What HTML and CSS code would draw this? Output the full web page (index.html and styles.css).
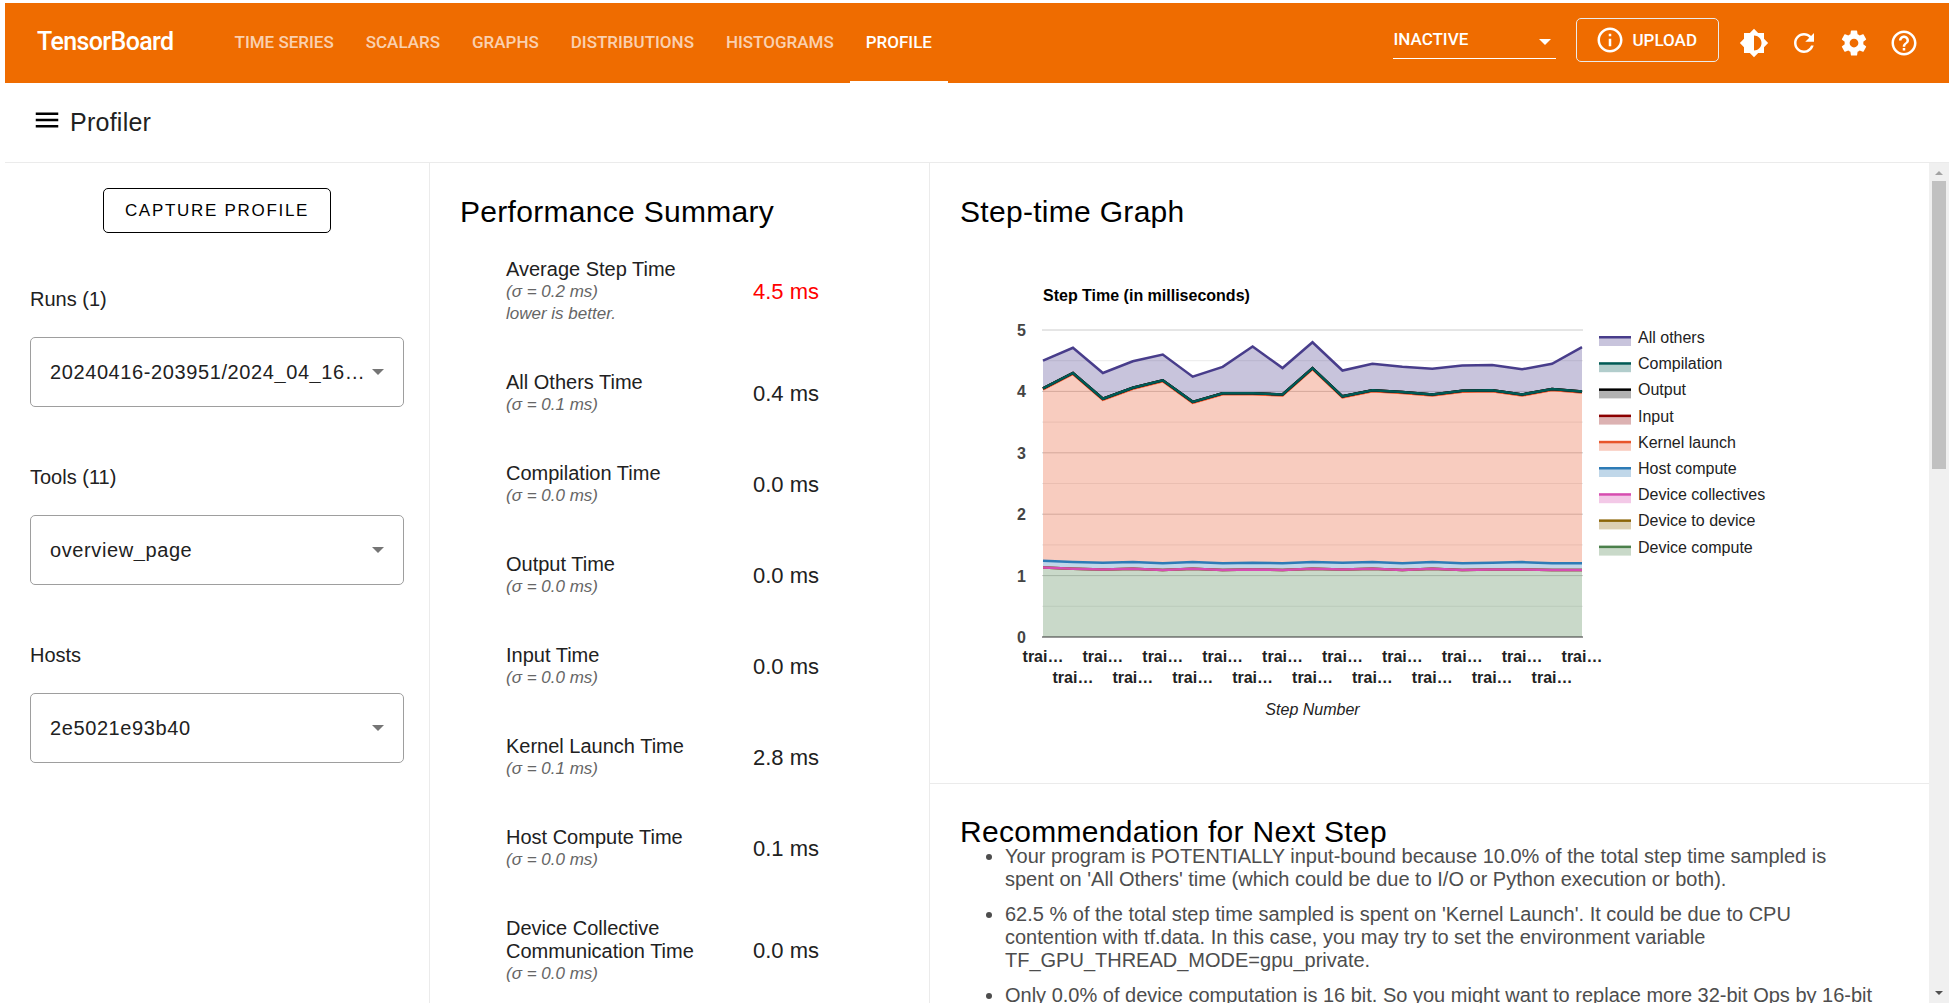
FILE: index.html
```html
<!DOCTYPE html>
<html lang="en">
<head>
<meta charset="utf-8">
<title>TensorBoard</title>
<link rel="stylesheet" href="styles.css">
</head>
<body>
<div class="app">
  <header class="topbar">
    <h1 class="brand">TensorBoard</h1>
    <nav class="tabs">
      <a class="tab" href="#time-series">TIME SERIES</a>
      <a class="tab" href="#scalars">SCALARS</a>
      <a class="tab" href="#graphs">GRAPHS</a>
      <a class="tab" href="#distributions">DISTRIBUTIONS</a>
      <a class="tab" href="#histograms">HISTOGRAMS</a>
      <a class="tab tab-active" href="#profile">PROFILE</a>
    </nav>
    <div class="actions">
      <select class="inactive" aria-label="Inactive dashboards"><option>INACTIVE</option></select>
      <button class="upload" type="button">
        <svg class="icon" viewBox="0 0 24 24" aria-hidden="true"><path d="M11 7h2v2h-2zm0 4h2v6h-2zm1-9C6.48 2 2 6.48 2 12s4.48 10 10 10 10-4.48 10-10S17.52 2 12 2zm0 18c-4.41 0-8-3.59-8-8s3.59-8 8-8 8 3.59 8 8-3.59 8-8 8z"/></svg>
        <span>UPLOAD</span>
      </button>
      <div class="tools">
        <button class="tool" type="button" aria-label="Toggle theme"><svg class="icon" viewBox="0 0 24 24"><path d="M20 15.31L23.31 12 20 8.69V4h-4.69L12 .69 8.69 4H4v4.69L.69 12 4 15.31V20h4.69L12 23.31 15.31 20H20v-4.69zM12 18V6c3.31 0 6 2.69 6 6s-2.69 6-6 6z"/></svg></button>
        <button class="tool" type="button" aria-label="Reload"><svg class="icon" viewBox="0 0 24 24"><path d="M17.65 6.35C16.2 4.9 14.21 4 12 4c-4.42 0-7.99 3.58-7.99 8s3.57 8 7.99 8c3.73 0 6.84-2.55 7.73-6h-2.08c-.82 2.33-3.04 4-5.65 4-3.31 0-6-2.69-6-6s2.69-6 6-6c1.66 0 3.14.69 4.22 1.78L13 11h7V4l-2.35 2.35z"/></svg></button>
        <button class="tool" type="button" aria-label="Settings"><svg class="icon" viewBox="0 0 24 24"><path d="M19.43 12.98c.04-.32.07-.64.07-.98s-.03-.66-.07-.98l2.11-1.65c.19-.15.24-.42.12-.64l-2-3.46c-.12-.22-.39-.3-.61-.22l-2.49 1c-.52-.4-1.08-.73-1.69-.98l-.38-2.65C14.46 2.18 14.25 2 14 2h-4c-.25 0-.46.18-.49.42l-.38 2.65c-.61.25-1.17.59-1.69.98l-2.49-1c-.23-.09-.49 0-.61.22l-2 3.46c-.13.22-.07.49.12.64l2.11 1.65c-.04.32-.07.65-.07.98s.03.66.07.98l-2.11 1.65c-.19.15-.24.42-.12.64l2 3.46c.12.22.39.3.61.22l2.49-1c.52.4 1.08.73 1.69.98l.38 2.65c.03.24.24.42.49.42h4c.25 0 .46-.18.49-.42l.38-2.65c.61-.25 1.17-.59 1.69-.98l2.49 1c.23.09.49 0 .61-.22l2-3.46c.12-.22.07-.49-.12-.64l-2.11-1.65zM12 15.5c-1.93 0-3.5-1.57-3.5-3.5s1.57-3.5 3.5-3.5 3.5 1.57 3.5 3.5-1.57 3.5-3.5 3.5z"/></svg></button>
        <button class="tool" type="button" aria-label="Help"><svg class="icon" viewBox="0 0 24 24"><path d="M11 18h2v-2h-2v2zm1-16C6.48 2 2 6.48 2 12s4.48 10 10 10 10-4.48 10-10S17.52 2 12 2zm0 18c-4.41 0-8-3.59-8-8s3.59-8 8-8 8 3.59 8 8-3.59 8-8 8zm0-14c-2.21 0-4 1.79-4 4h2c0-1.1.9-2 2-2s2 .9 2 2c0 2-3 1.75-3 5h2c0-2.25 3-2.5 3-5 0-2.21-1.79-4-4-4z"/></svg></button>
      </div>
    </div>
  </header>

  <div class="subbar">
    <button class="menu" type="button" aria-label="Toggle sidebar"><svg class="icon" viewBox="0 0 24 24"><path d="M3 18h18v-2H3v2zm0-5h18v-2H3v2zm0-7v2h18V6H3z"/></svg></button>
    <span class="subtitle">Profiler</span>
  </div>

  <div class="body">
    <aside class="sidebar">
      <button class="capture" type="button">CAPTURE PROFILE</button>
      <div class="field">
        <label for="runs">Runs (1)</label>
        <select id="runs" class="picker"><option>20240416-203951/2024_04_16…</option></select>
      </div>
      <div class="field">
        <label for="tools">Tools (11)</label>
        <select id="tools" class="picker"><option>overview_page</option></select>
      </div>
      <div class="field">
        <label for="hosts">Hosts</label>
        <select id="hosts" class="picker"><option>2e5021e93b40</option></select>
      </div>
    </aside>

    <section class="summary">
      <h2 class="heading">Performance Summary</h2>
      <table class="metrics">
        <tr><th scope="row">Average Step Time<small>(σ = 0.2 ms)</small><small>lower is better.</small></th><td class="alert">4.5 ms</td></tr>
        <tr><th scope="row">All Others Time<small>(σ = 0.1 ms)</small></th><td>0.4 ms</td></tr>
        <tr><th scope="row">Compilation Time<small>(σ = 0.0 ms)</small></th><td>0.0 ms</td></tr>
        <tr><th scope="row">Output Time<small>(σ = 0.0 ms)</small></th><td>0.0 ms</td></tr>
        <tr><th scope="row">Input Time<small>(σ = 0.0 ms)</small></th><td>0.0 ms</td></tr>
        <tr><th scope="row">Kernel Launch Time<small>(σ = 0.1 ms)</small></th><td>2.8 ms</td></tr>
        <tr><th scope="row">Host Compute Time<small>(σ = 0.0 ms)</small></th><td>0.1 ms</td></tr>
        <tr><th scope="row">Device Collective Communication Time<small>(σ = 0.0 ms)</small></th><td>0.0 ms</td></tr>
      </table>
    </section>

    <main class="main">
      <section class="graph">
        <h2 class="heading">Step-time Graph</h2>
        <svg id="chart" class="chart" width="660" height="480" role="img" aria-label="Step time in milliseconds"></svg>
      </section>
      <section class="advice">
        <h2 class="heading">Recommendation for Next Step</h2>
        <ul class="tips">
          <li>Your program is POTENTIALLY input-bound because 10.0% of the total step time sampled is spent on 'All Others' time (which could be due to I/O or Python execution or both).</li>
          <li>62.5 % of the total step time sampled is spent on 'Kernel Launch'. It could be due to CPU contention with tf.data. In this case, you may try to set the environment variable TF_GPU_THREAD_MODE=gpu_private.</li>
          <li>Only 0.0% of device computation is 16 bit. So you might want to replace more 32-bit Ops by 16-bit Ops to improve performance (if the reduced accuracy is acceptable).</li>
        </ul>
      </section>
    </main>

    <div class="scrollbar" aria-hidden="true">
      <svg class="arrow arrow-up" viewBox="0 0 8 4"><path d="M4 0l4 4H0z"/></svg>
      <div class="thumb"></div>
      <svg class="arrow arrow-down" viewBox="0 0 8 4"><path d="M0 0h8L4 4z"/></svg>
    </div>
  </div>
</div>
<script src="chart.js"></script>
</body>
</html>
```
FILE: chart.js
```js
// Stacked area chart of the step time, one point per training step.
const svg = document.getElementById('chart');
const NS = 'http://www.w3.org/2000/svg';
const left = 83, right = 622, zero = 397, unit = 61.4;
const steps = 19;

function add(name, attrs, text) {
  const el = document.createElementNS(NS, name);
  for (const key in attrs) el.setAttribute(key, attrs[key]);
  if (text) el.textContent = text;
  svg.appendChild(el);
}

const x = i => left + (right - left) * i / (steps - 1);
const y = v => zero - v * unit;

const device = [1.13, 1.11, 1.1, 1.11, 1.09, 1.11, 1.09, 1.1, 1.09, 1.11, 1.1, 1.11, 1.09, 1.11, 1.09, 1.1, 1.1, 1.09, 1.09];
const host = [1.24, 1.22, 1.21, 1.22, 1.2, 1.22, 1.2, 1.21, 1.2, 1.22, 1.21, 1.22, 1.2, 1.22, 1.2, 1.21, 1.22, 1.2, 1.2];
const kernel = [4.05, 4.3, 3.88, 4.06, 4.18, 3.83, 3.97, 3.97, 3.95, 4.38, 3.92, 4.02, 3.99, 3.95, 4.01, 4.02, 3.95, 4.04, 4];
const total = [4.5, 4.71, 4.3, 4.49, 4.6, 4.24, 4.4, 4.73, 4.38, 4.8, 4.34, 4.45, 4.4, 4.37, 4.42, 4.43, 4.36, 4.45, 4.72];
const none = new Array(steps).fill(0);

const series = [
  ['Device compute', '#4b804b', device],
  ['Device to device', '#8b6508', device],
  ['Device collectives', '#d64db0', device],
  ['Host compute', '#2d7bb6', host],
  ['Kernel launch', '#e8552a', kernel],
  ['Input', '#8b0000', kernel],
  ['Output', '#000000', kernel],
  ['Compilation', '#005a55', kernel],
  ['All others', '#483d8b', total]
];

add('text', { x: left, y: 61, class: 'chart-title' }, 'Step Time (in milliseconds)');

for (let v = 0.5; v <= 5; v += 0.5) {
  add('line', { x1: left - 1, x2: right + 1, y1: y(v), y2: y(v), class: v % 1 ? 'grid-minor' : 'grid-major' });
}

let below = none;
for (const [, color, values] of series) {
  if (values !== below) {
    const top = values.map((v, i) => x(i) + ',' + y(v));
    const bottom = below.map((v, i) => x(i) + ',' + y(v)).reverse();
    add('polygon', { points: top.concat(bottom).join(' '), fill: color, 'fill-opacity': 0.3 });
  }
  below = values;
}
for (const [name, color, values] of series) {
  // the kernel launch line sits a little lower than the ones stacked on it
  const drop = name === 'Kernel launch' ? 1 : 0;
  add('polyline', { points: values.map((v, i) => x(i) + ',' + (y(v) + drop)).join(' '), stroke: color, class: 'curve' });
}
add('line', { x1: left - 1, x2: right + 1, y1: zero, y2: zero, class: 'baseline' });

for (let v = 0; v <= 5; v++) {
  add('text', { x: 66, y: y(v) + 6, class: 'tick-y' }, String(v));
}
for (let i = 0; i < steps; i++) {
  add('text', { x: x(i), y: i % 2 ? 443 : 422, class: 'tick-x' }, 'trai…');
}
add('text', { x: (left + right) / 2, y: 475, class: 'axis-title' }, 'Step Number');

series.slice().reverse().forEach(([name, color], i) => {
  const top = 97 + i * 26.2;
  add('rect', { x: 639, y: top, width: 32, height: 9, fill: color, 'fill-opacity': 0.3 });
  add('rect', { x: 639, y: top - 1, width: 32, height: 2.5, fill: color });
  add('text', { x: 678, y: top + 6, class: 'legend' }, name);
});
```
FILE: styles.css
```css
* { box-sizing: border-box; }

body {
  margin: 0;
  background: #fff;
  color: #212121;
  font-family: "Liberation Sans", Arial, sans-serif;
  font-size: 20px;
}

button, select { font: inherit; cursor: pointer; }

.app {
  display: flex;
  flex-direction: column;
  height: 100vh;
  padding: 3px 3px 3px 5px;
}

.icon { display: block; width: 30px; height: 30px; fill: currentColor; }

/* Top bar */
.topbar {
  display: flex;
  flex: none;
  height: 80px;
  padding-right: 20px;
  background: #ef6c00;
  color: #fff;
  font-family: Roboto, sans-serif;
  font-size: 17px;
  font-weight: 500;
}

.brand {
  margin: 0;
  padding: 0 45px 0 32px;
  font-size: 25px;
  font-weight: 500;
  line-height: 77px;
  letter-spacing: -0.025em;
}

.tabs { display: flex; }

.tab {
  padding: 0 16px;
  border-bottom: 2px solid transparent;
  color: rgba(255, 255, 255, 0.7);
  line-height: 78px;
  text-decoration: none;
}

.tab-active { border-color: #fff; color: #fff; }

.actions { display: flex; flex: 1; justify-content: flex-end; }

.inactive {
  width: 163px;
  height: 39px;
  margin: 17px 20px 0 0;
  padding: 0;
  appearance: none;
  border: 0;
  border-bottom: 1px solid #fff;
  border-radius: 0;
  background: url("data:image/svg+xml,%3Csvg xmlns='http://www.w3.org/2000/svg' viewBox='0 0 12 6'%3E%3Cpath fill='%23fff' d='M0 0h12L6 6z'/%3E%3C/svg%3E") no-repeat right 5px bottom 13px / 12px 6px;
  color: #fff;
}

.upload {
  display: flex;
  align-items: center;
  gap: 7px;
  height: 44px;
  margin: 15px 10px 0 0;
  padding: 0 21px 0 18px;
  border: 1px solid #ebebeb;
  border-radius: 5px;
  background: none;
  color: #fff;
}

.tools { display: flex; }

.tool {
  display: grid;
  place-items: center;
  width: 50px;
  padding: 0;
  border: 0;
  background: none;
  color: #fff;
}

/* Sub bar */
.subbar {
  display: flex;
  flex: none;
  align-items: center;
  gap: 8px;
  height: 80px;
  padding: 0 27px;
  border-bottom: 1px solid #ebebeb;
}

.menu { padding: 0 0 5px; border: 0; background: none; color: #000; }

.subtitle { font-size: 25px; letter-spacing: 0.01em; }

/* Three columns under the bars */
.body { display: flex; flex: 1; min-height: 0; }

.heading {
  margin: 0;
  color: #000;
  font-size: 30px;
  font-weight: 400;
  line-height: 26px;
  letter-spacing: 0.01em;
}

.sidebar {
  flex: 0 0 425px;
  padding: 25px;
  border-right: 1px solid #ebebeb;
}

.capture {
  display: block;
  height: 45px;
  margin: 0 auto 54px;
  padding: 0 21px;
  border: 1px solid #000;
  border-radius: 5px;
  background: none;
  color: #000;
  font-size: 17px;
  letter-spacing: 0.1em;
}

.field { display: flex; flex-direction: column; gap: 26px; margin-bottom: 58px; }

.field label { line-height: 24px; }

.picker {
  height: 70px;
  padding: 0 36px 0 19px;
  appearance: none;
  border: 1px solid #9e9e9e;
  border-radius: 5px;
  background: url("data:image/svg+xml,%3Csvg xmlns='http://www.w3.org/2000/svg' viewBox='0 0 12 6'%3E%3Cpath fill='%23757575' d='M0 0h12L6 6z'/%3E%3C/svg%3E") no-repeat right 19px center / 12px 6px;
  color: #212121;
  letter-spacing: 0.03em;
}

.summary {
  flex: 0 0 500px;
  overflow: hidden;
  padding: 36px 30px 0;
  border-right: 1px solid #ebebeb;
}

.metrics { margin: 10px 0 0 46px; border-collapse: collapse; }

.metrics th {
  width: 247px;
  padding: 23px 40px 23px 0;
  font-weight: 400;
  line-height: 23px;
  text-align: left;
}

.metrics small {
  display: block;
  color: #666;
  font-size: 17px;
  font-style: italic;
  line-height: 22px;
}

.metrics td { padding: 0; font-size: 22px; }

.metrics .alert { color: #f00; }

.main { flex: 1; min-width: 0; overflow: hidden; }

.graph { height: 621px; padding: 36px 30px 0; border-bottom: 1px solid #ebebeb; }

.advice { padding: 35px 49px 0 30px; }

.tips { margin: 0; padding-left: 45px; color: #4d4d4d; line-height: 23px; }

.tips li { margin-bottom: 12px; }

/* Chart */
.chart { display: block; margin-top: 15px; overflow: visible; font-size: 16px; }
.chart-title { font-weight: 700; fill: #000; }
.grid-major { stroke: #ccc; }
.grid-minor { stroke: #ebebeb; }
.baseline { stroke: #333; }
.curve { fill: none; stroke-width: 2.5px; }
.tick-y { font-weight: 700; fill: #444; text-anchor: end; }
.tick-x { font-weight: 700; fill: #222; text-anchor: middle; }
.axis-title { font-style: italic; fill: #222; text-anchor: middle; }
.legend { fill: #222; }

/* Scroll bar */
.scrollbar {
  display: flex;
  flex: 0 0 20px;
  flex-direction: column;
  align-items: center;
  padding: 8px 0;
  background: #f0f0f0;
}

.arrow { width: 8px; height: 4px; }
.arrow-up { margin-bottom: 6px; fill: #a3a3a3; }
.arrow-down { margin-top: auto; fill: #505050; }
.thumb { width: 14px; height: 35%; background: #c1c1c1; }
```
